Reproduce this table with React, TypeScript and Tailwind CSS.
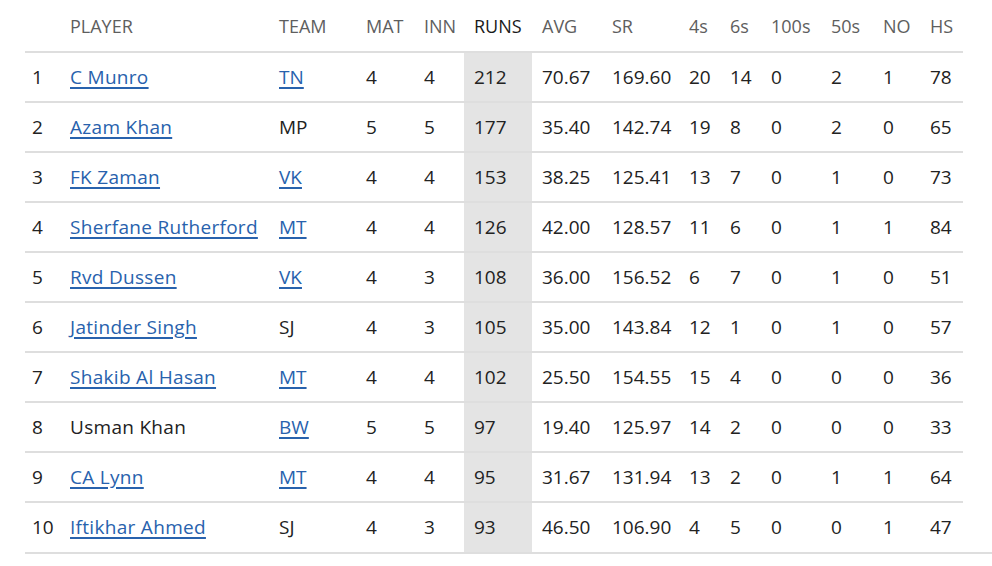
const HEAD = ['', 'PLAYER', 'TEAM', 'MAT', 'INN', 'RUNS', 'AVG', 'SR', '4s', '6s', '100s', '50s', 'NO', 'HS'];

const WIDTHS = ['w-[35px]', 'w-[209px]', 'w-[87px]', 'w-[58px]', 'w-[50px]', 'w-[68px]', 'w-[70px]', 'w-[77px]', 'w-[41px]', 'w-[41px]', 'w-[60px]', 'w-[52px]', 'w-[47px]', 'w-[43px]'];

type Row = {
  player: string;
  playerLink: boolean;
  team: string;
  teamLink: boolean;
  stats: string[];
};

const ROWS: Row[] = [
  { player: 'C Munro', playerLink: true, team: 'TN', teamLink: true, stats: ['4', '4', '212', '70.67', '169.60', '20', '14', '0', '2', '1', '78'] },
  { player: 'Azam Khan', playerLink: true, team: 'MP', teamLink: false, stats: ['5', '5', '177', '35.40', '142.74', '19', '8', '0', '2', '0', '65'] },
  { player: 'FK Zaman', playerLink: true, team: 'VK', teamLink: true, stats: ['4', '4', '153', '38.25', '125.41', '13', '7', '0', '1', '0', '73'] },
  { player: 'Sherfane Rutherford', playerLink: true, team: 'MT', teamLink: true, stats: ['4', '4', '126', '42.00', '128.57', '11', '6', '0', '1', '1', '84'] },
  { player: 'Rvd Dussen', playerLink: true, team: 'VK', teamLink: true, stats: ['4', '3', '108', '36.00', '156.52', '6', '7', '0', '1', '0', '51'] },
  { player: 'Jatinder Singh', playerLink: true, team: 'SJ', teamLink: false, stats: ['4', '3', '105', '35.00', '143.84', '12', '1', '0', '1', '0', '57'] },
  { player: 'Shakib Al Hasan', playerLink: true, team: 'MT', teamLink: true, stats: ['4', '4', '102', '25.50', '154.55', '15', '4', '0', '0', '0', '36'] },
  { player: 'Usman Khan', playerLink: false, team: 'BW', teamLink: true, stats: ['5', '5', '97', '19.40', '125.97', '14', '2', '0', '0', '0', '33'] },
  { player: 'CA Lynn', playerLink: true, team: 'MT', teamLink: true, stats: ['4', '4', '95', '31.67', '131.94', '13', '2', '0', '1', '1', '64'] },
  { player: 'Iftikhar Ahmed', playerLink: true, team: 'SJ', teamLink: false, stats: ['4', '3', '93', '46.50', '106.90', '4', '5', '0', '0', '1', '47'] },
];

function Cell({ text, link }: { text: string; link: boolean }) {
  if (!link) return <span>{text}</span>;
  return (
    <a href="#" className="text-[#2862ad] underline decoration-[1.5px] underline-offset-[3px]">
      {text}
    </a>
  );
}

export default function App() {
  return (
    <div className="w-[992px] h-[566px] bg-white overflow-hidden font-['Open_Sans',sans-serif]">
      <div className="ml-[25px] border-b-2 border-[#dedede]">
        <table className="table-fixed border-collapse w-[938px]">
          <colgroup>
            {WIDTHS.map((w, i) => (
              <col key={i} className={w} />
            ))}
          </colgroup>
          <thead>
            <tr className="h-[52px]">
              {HEAD.map((h, i) => (
                <th
                  key={i}
                  className={`text-left font-normal text-[18px] pl-[10px] pt-[1px] ${
                    h === 'RUNS' ? 'text-[#1a1a1a]' : 'text-[#5e5e5e]'
                  }`}
                >
                  {h}
                </th>
              ))}
            </tr>
          </thead>
          <tbody>
            {ROWS.map((r, idx) => (
              <tr key={idx} className={`h-[50px] text-[19px] text-[#222] ${idx < ROWS.length - 1 ? 'border-b-2' : ''} border-t-2 border-[#dedede]`}>
                <td className="pl-[7px]">{idx + 1}</td>
                <td className="pl-[10px] whitespace-nowrap tracking-[0.3px]">
                  <Cell text={r.player} link={r.playerLink} />
                </td>
                <td className="pl-[10px]">
                  <Cell text={r.team} link={r.teamLink} />
                </td>
                {r.stats.map((s, j) => (
                  <td key={j} className={`pl-[10px] ${j === 2 ? 'bg-[#e4e4e4]' : ''}`}>
                    {s}
                  </td>
                ))}
              </tr>
            ))}
          </tbody>
        </table>
      </div>
    </div>
  );
}
